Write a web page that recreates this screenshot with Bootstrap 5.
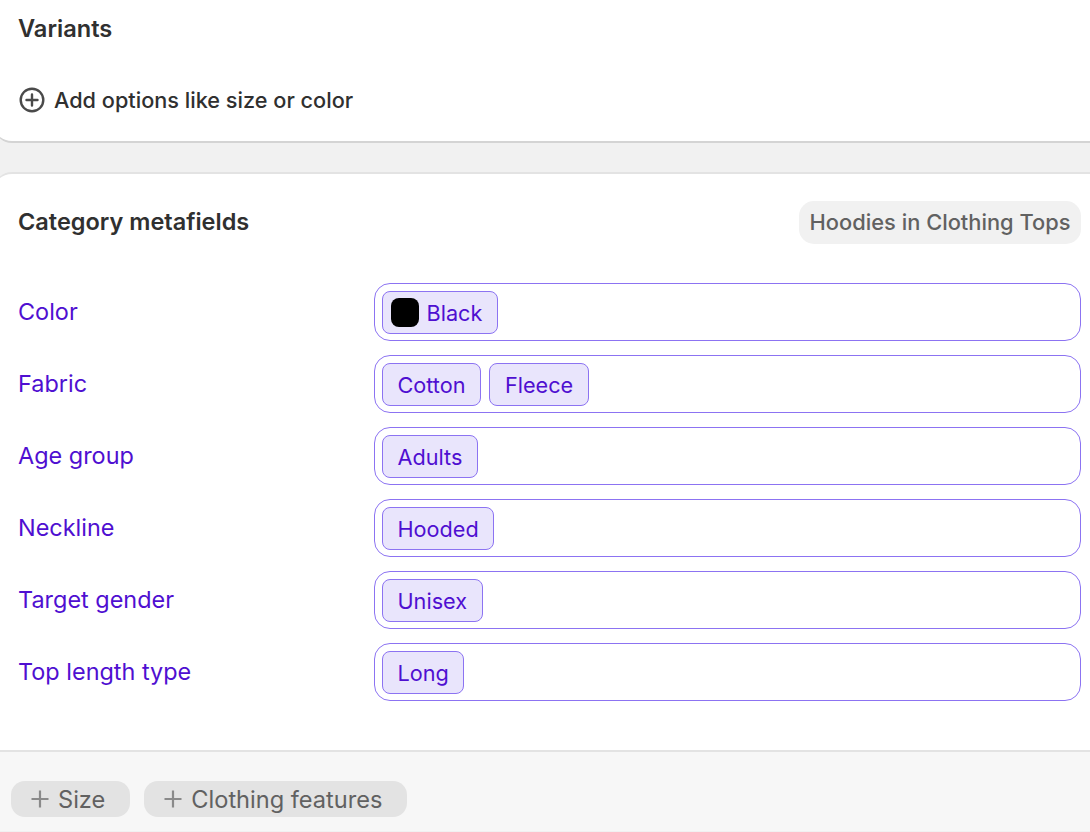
<!DOCTYPE html>
<html lang="en">
<head>
    <meta charset="UTF-8">
    <meta name="viewport" content="width=device-width, initial-scale=1.0">
    <title>Category metafields</title>
    <link href="https://cdn.jsdelivr.net/npm/bootstrap@5.3.3/dist/css/bootstrap.min.css" rel="stylesheet">
    <style>
        body { background: #f1f1f1; font-family: "Inter", "Liberation Sans", sans-serif; font-optical-sizing: none; color: #303030; overflow: hidden; height: 832px; }
        .panel-top { background: #fff; height: 143px; margin: 0 -30px 0 -6px; border-radius: 0 0 18px 18px; border-bottom: 2px solid #d4d4d4; padding: 13px 0 0 24px; }
        .panel-top h2 { font-size: 23.6px; font-weight: 600; line-height: 32px; margin: 0; }
        .add-row { margin-top: 40px; margin-left: 1px; font-size: 21.7px; font-weight: 500; line-height: 30px; gap: 9px; }
        .add-row svg { width: 26px; height: 26px; }
        .panel-meta { background: #fff; margin: 29px -30px 0 -6px; border-radius: 18px 18px 0 0; border-top: 2px solid #e3e3e3; height: 578px; padding: 27px 39px 0 24px; }
        .panel-meta h2 { font-size: 23.5px; font-weight: 600; margin: 0 0 1px; line-height: 42px; }
        .cat-pill { background: #f1f1f1; color: #616161; font-size: 21.85px; font-weight: 500; height: 43px; line-height: 43px; padding: 0 10.5px; border-radius: 15px; }
        .meta-list { margin-top: 39px; gap: 14px; }
        .meta-label { width: 356px; height: 58px; color: #4f0fd1; font-size: 23.45px; line-height: 58px; }
        .meta-box { height: 58px; border: 1.5px solid #8c73f2; border-radius: 16px; padding: 6.5px; gap: 8px; flex: 1; }
        .val-chip { height: 43px; background: #e9e5fc; border: 1.5px solid #8c73f2; border-radius: 8px; color: #4f0fd1; font-size: 21.65px; line-height: 1; padding: 3px 14.5px 0 15px; gap: 8px; }
        .val-chip.has-swatch { padding-left: 8px; }
        .swatch { width: 28px; height: 29px; margin-top: -3px; background: #000; border-radius: 8px; }
        .panel-foot { background: #f7f7f7; border-top: 2px solid #e3e3e3; height: 81px; padding: 29px 0 0 11px; gap: 14px; }
        .add-chip { background: #e3e3e3; color: #616161; font-size: 23.6px; height: 36px; border-radius: 14px; padding: 1px 25px 0 18.5px; gap: 8.5px; }
        .add-chip svg { width: 20px; height: 20px; margin-top: -1px; }
    </style>
</head>
<body>
    <div class="panel-top">
        <h2>Variants</h2>
        <div class="add-row d-flex align-items-center">
            <svg viewBox="0 0 26 26" fill="none" stroke="#4a4a4a" stroke-width="2.4" stroke-linecap="round">
                <circle cx="13" cy="13" r="11.3"/>
                <path d="M13 7.500v11M7.500 13h11"/>
            </svg>
            <span>Add options like size or color</span>
        </div>
    </div>

    <div class="panel-meta">
        <div class="d-flex justify-content-between align-items-center">
            <h2>Category metafields</h2>
            <span class="cat-pill">Hoodies in Clothing Tops</span>
        </div>
        <div class="meta-list d-flex flex-column">
            <div class="d-flex">
                <div class="meta-label">Color</div>
                <div class="meta-box d-flex">
                    <span class="val-chip has-swatch d-flex align-items-center"><span class="swatch"></span>Black</span>
                </div>
            </div>
            <div class="d-flex">
                <div class="meta-label">Fabric</div>
                <div class="meta-box d-flex">
                    <span class="val-chip d-flex align-items-center">Cotton</span>
                    <span class="val-chip d-flex align-items-center">Fleece</span>
                </div>
            </div>
            <div class="d-flex">
                <div class="meta-label">Age group</div>
                <div class="meta-box d-flex"><span class="val-chip d-flex align-items-center">Adults</span></div>
            </div>
            <div class="d-flex">
                <div class="meta-label">Neckline</div>
                <div class="meta-box d-flex"><span class="val-chip d-flex align-items-center">Hooded</span></div>
            </div>
            <div class="d-flex">
                <div class="meta-label">Target gender</div>
                <div class="meta-box d-flex"><span class="val-chip d-flex align-items-center">Unisex</span></div>
            </div>
            <div class="d-flex">
                <div class="meta-label">Top length type</div>
                <div class="meta-box d-flex"><span class="val-chip d-flex align-items-center">Long</span></div>
            </div>
        </div>
    </div>

    <div class="panel-foot d-flex align-items-start">
        <span class="add-chip d-flex align-items-center">
            <svg viewBox="0 0 20 20" fill="none" stroke="#8a8a8a" stroke-width="2.2"><path d="M10 1.500v17M1.500 10h17"/></svg>Size
        </span>
        <span class="add-chip d-flex align-items-center">
            <svg viewBox="0 0 20 20" fill="none" stroke="#8a8a8a" stroke-width="2.2"><path d="M10 1.500v17M1.500 10h17"/></svg>Clothing features
        </span>
    </div>

    <script src="https://cdn.jsdelivr.net/npm/bootstrap@5.3.3/dist/js/bootstrap.bundle.min.js"></script>
</body>
</html>
